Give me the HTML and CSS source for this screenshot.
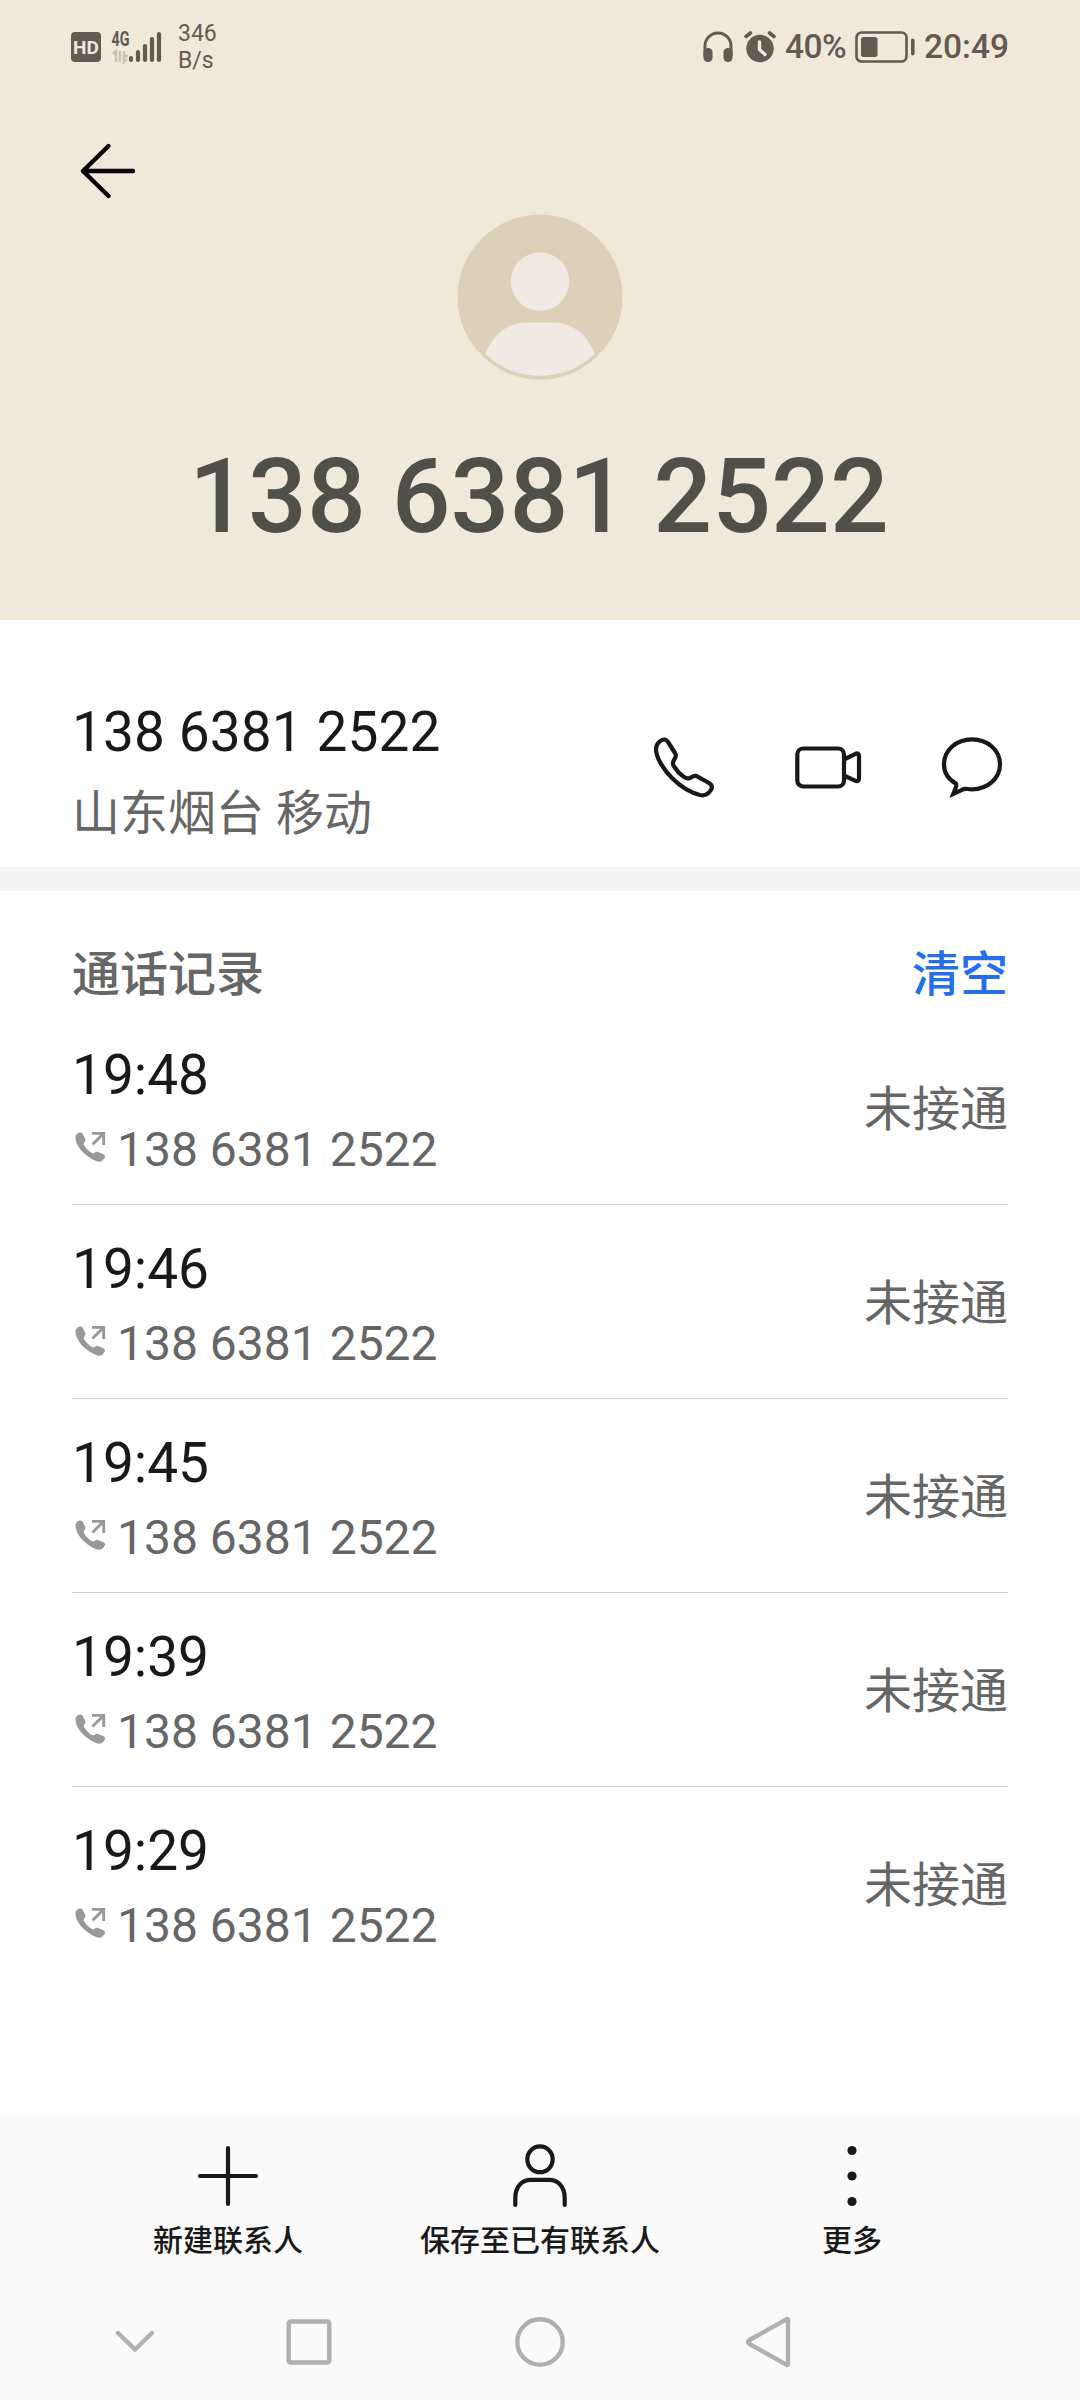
FILE: index.html
```html
<!DOCTYPE html>
<html lang="zh-CN">
<head>
    <meta charset="UTF-8">
    <meta name="viewport" content="width=device-width, initial-scale=1.0">
    <title>138 6381 2522</title>
    <link rel="stylesheet" href="styles.css">
</head>
<body>
    <header class="top">
        <div class="status">
            <div class="status-left">
                <span class="hd">HD</span>
                <svg class="signal" width="52" height="36" viewBox="0 0 52 36">
                    <text class="net" x="0.5" y="16.5" textLength="18" lengthAdjust="spacingAndGlyphs">4G</text>
                    <path class="data" d="M2 25L5 22V33M9 22V33M13 22V33L16 30M13 27H17"/>
                    <path class="bars" d="M20 29V31M27 23V31M34 17V31M41 10V31M48 5V31"/>
                </svg>
                <div class="speed">346<br>B/s</div>
            </div>
            <div class="status-right">
                <svg width="30" height="32" viewBox="0 0 30 32">
                    <path d="M2 25V15a13 13 0 0 1 26 0V25" fill="none" stroke="#645a52" stroke-width="3"/>
                    <rect x="0.5" y="17" width="9" height="14" rx="4.2" fill="#645a52"/>
                    <rect x="20.5" y="17" width="9" height="14" rx="4.2" fill="#645a52"/>
                </svg>
                <svg class="alarm" width="32" height="32" viewBox="0 0 32 32">
                    <circle cx="16" cy="17.5" r="13.7" fill="#645a52"/>
                    <path d="M2 5.5L6.5 2M30 5.5L25.5 2" stroke="#645a52" stroke-width="3.6" stroke-linecap="round"/>
                    <path d="M15.5 11V18.5L21 23.5" fill="none" stroke="#f0e9d9" stroke-width="3.4" stroke-linecap="round" stroke-linejoin="round"/>
                </svg>
                <span class="percent">40%</span>
                <svg class="battery" width="60" height="32" viewBox="0 0 60 32">
                    <rect x="1.5" y="1.5" width="50" height="29" rx="5" fill="none" stroke="#645a52" stroke-width="2.6"/>
                    <rect x="6" y="6" width="16.5" height="20" rx="2.5" fill="#645a52"/>
                    <rect x="56" y="7.5" width="3.6" height="17" rx="1.8" fill="#645a52"/>
                </svg>
                <span class="clock">20:49</span>
            </div>
        </div>
        <div class="toolbar">
            <svg width="72" height="72" viewBox="0 0 72 72">
                <path d="M36.500 11L11 36L36.500 61M11 36H61" fill="none" stroke="#000" stroke-width="4.4" stroke-linecap="round" stroke-linejoin="round"/>
            </svg>
        </div>
        <svg class="avatar" width="166" height="166" viewBox="0 0 166 166">
            <circle cx="83" cy="83" r="82.5" fill="#ddd0b8"/>
            <circle cx="83" cy="67.5" r="29.2" fill="#f0eae3"/>
            <path d="M28.5 140C35 121 50 108.500 70 108.500H96C116 108.500 131 121 137.500 140A79 79 0 0 1 28.500 140Z" fill="#f0eae3"/>
        </svg>
        <h1>138 6381 2522</h1>
    </header>

    <section class="contact">
        <div>
            <p class="number">138 6381 2522</p>
            <p class="place">山东烟台 移动</p>
        </div>
        <div class="actions">
            <svg width="72" height="72" viewBox="0 0 72 72">
                <path d="M8 18C8 13 12.500 8.500 16.500 8.500C18 8.500 19 9.300 20 11L27 22C28 23.500 28 25 27.300 26.500L25.500 30C24.500 32 24.700 33.500 26 35.500C28.500 39.500 31.500 43 36 46C38.500 47.700 40.500 48 43 46.500C45.500 44.800 47.500 44.300 50 45.800L61 52C64 53.800 64.500 56 63 58.800C60.500 63 56.500 65 52 64C42 61.500 32 55 24 47C16 39 8 27 8 18Z"/>
            </svg>
            <svg width="72" height="72" viewBox="0 0 72 72">
                <rect x="5.3" y="17.5" width="46.700" height="38" rx="6"/>
                <path d="M53 28L63.500 22.800Q67 21.500 67 25V47.500Q67 51 63.500 49.800L53 45"/>
            </svg>
            <svg width="72" height="72" viewBox="0 0 72 72">
                <path stroke-linejoin="miter" d="M20 52.700C12.500 48.500 8 41.500 8 33.300C8 19 20.500 8.400 36 8.400S64 19 64 33.300S51.500 58.300 36 58.300C29 58 28.500 57.300 26 58.800L17.300 62.800L19.800 56.500Q20.800 53.800 20 52.700Z"/>
            </svg>
        </div>
    </section>

    <section class="log">
        <div class="log-head">
            <h2>通话记录</h2>
            <a class="clear">清空</a>
        </div>
        <ul id="calls"></ul>
    </section>

    <footer>
        <div class="menu">
            <div class="item">
                <svg width="72" height="72" viewBox="0 0 72 72">
                    <path d="M36 8V64M8 36H64"/>
                </svg>
                <span>新建联系人</span>
            </div>
            <div class="item">
                <svg width="72" height="72" viewBox="0 0 72 72">
                    <ellipse cx="36" cy="19.300" rx="12.700" ry="12.900"/>
                    <path d="M11.300 65V58C11.300 46.500 18 39.800 27 39.800H45C54 39.800 60.700 46.500 60.700 58V65"/>
                </svg>
                <span>保存至已有联系人</span>
            </div>
            <div class="item">
                <svg class="dots" width="72" height="72" viewBox="0 0 72 72">
                    <circle cx="36" cy="10.500" r="4.600"/>
                    <circle cx="36" cy="36" r="4.600"/>
                    <circle cx="36" cy="61.500" r="4.600"/>
                </svg>
                <span>更多</span>
            </div>
        </div>
        <div class="nav">
            <svg width="54" height="54" viewBox="0 0 54 54"><path d="M10 18L27 34.500L44 18"/></svg>
            <svg width="54" height="54" viewBox="0 0 54 54"><rect x="6.700" y="6.500" width="40.600" height="41" rx="2"/></svg>
            <svg width="54" height="54" viewBox="0 0 54 54"><circle cx="27" cy="27" r="22.700"/></svg>
            <svg width="54" height="54" viewBox="0 0 54 54"><path d="M46.200 4.500Q48 3 48 5.500V48.500Q48 51 46.200 49.500L9.500 29Q6.500 27 9.500 25Z"/></svg>
        </div>
    </footer>

    <script>
        const times = ["19:48", "19:46", "19:45", "19:39", "19:29"];
        const calls = document.querySelector("#calls");

        // one row for each outgoing call
        times.forEach((time) => {
            calls.innerHTML += `
                <li>
                    <div>
                        <p class="time">${time}</p>
                        <p class="caller">
                            <svg width="31" height="31" viewBox="0 0 31 31">
                                <path d="M.5 4.500C1.500 1.500 4 0 6 .5C7 .7 7.500 1.500 8 2.500L10.300 7C11 8.700 9.500 9.500 8.700 11.500C8.500 13.500 13 19 17.500 21.300C19.500 21.800 20.500 19.500 22.500 19.700L28 22C30 23 30.500 24.500 29.500 26C28 28.500 25.500 30.500 22.500 29.500C12 26 0 15 .5 4.500Z" fill="#999"/>
                                <path d="M17 1.400H28.700V13M17.500 12.500L28 2" fill="none" stroke="#999" stroke-width="2.900"/>
                            </svg>
                            <span>138 6381 2522</span>
                        </p>
                    </div>
                    <span class="state">未接通</span>
                </li>`;
        });
    </script>
</body>
</html>
```
FILE: styles.css
```css
* {
    margin: 0;
    padding: 0;
    box-sizing: border-box;
}
body {
    display: flex;
    flex-direction: column;
    width: 1080px;
    height: 2400px;
    background-color: #fff;
    color: #191919;
    font-family: Roboto, "Noto Sans CJK SC", sans-serif;
}
svg {
    display: block;
    flex: none;
}

/* header */
.top {
    display: flex;
    flex-direction: column;
    height: 620px;
    background-color: #f0e9d9;
}
.status {
    display: flex;
    justify-content: space-between;
    height: 94px;
    padding: 0 71px;
    color: #645a52;
}
.status-left, .status-right {
    display: flex;
    align-items: center;
}
.hd {
    width: 30px;
    height: 30px;
    border-radius: 4px;
    background-color: #645a52;
    color: #f0e9d9;
    font-size: 19px;
    font-weight: bold;
    line-height: 31px;
    text-align: center;
}
.signal {
    margin-left: 10px;
}
.net {
    fill: #645a52;
    font-size: 20px;
    font-weight: bold;
}
.data {
    fill: none;
    stroke: #c9c0b2;
    stroke-width: 2.4;
}
.bars {
    stroke: #645a52;
    stroke-width: 4.2;
    stroke-linecap: round;
}
.speed {
    margin-left: 15px;
    font-size: 23px;
    line-height: 27px;
}
.alarm {
    margin-left: 11px;
}
.percent, .clock {
    font-size: 33.5px;
    font-weight: 500;
    line-height: 40px;
}
.percent {
    width: 62px;
    margin-left: 9px;
    letter-spacing: -0.5px;
}
.battery {
    margin: 0 9px 0 8px;
}
.toolbar {
    padding: 41px 0 0 72px;
}
.avatar {
    margin: 7px auto 0;
}
h1 {
    margin-top: 57px;
    color: #515048;
    font-size: 103.5px;
    font-weight: 500;
    line-height: 120px;
    letter-spacing: 0.1px;
    text-align: center;
    text-indent: -2px;
}

/* number and its actions */
.contact {
    display: flex;
    justify-content: space-between;
    height: 271px;
    padding: 76px 72px 0;
    border-bottom: 24px solid #f5f5f5;
}
.number {
    font-size: 55px;
    line-height: 72px;
    letter-spacing: 0.1px;
}
.place {
    margin-top: 14px;
    color: #666;
    font-size: 48px;
    line-height: 64px;
}
.actions {
    display: flex;
    gap: 72px;
    padding-top: 35px;
}
.actions svg, .menu svg {
    fill: none;
    stroke: #191919;
    stroke-width: 4.2;
    stroke-linejoin: round;
    stroke-linecap: round;
}

/* call log */
.log {
    flex: 1;
    padding: 48px 72px 0;
}
.log-head {
    display: flex;
    justify-content: space-between;
    font-size: 48px;
    line-height: 72px;
}
h2 {
    color: #666;
    font-size: 48px;
    font-weight: 500;
}
.clear {
    color: #256fec;
    font-weight: 500;
}
li {
    display: flex;
    align-items: center;
    justify-content: space-between;
    height: 194px;
    padding: 31px 0 25px;
    border-bottom: 1px solid #ccc;
    list-style: none;
}
li:last-child {
    border-bottom-color: transparent;
}
.time {
    font-size: 55px;
    line-height: 68px;
}
.caller {
    display: flex;
    align-items: center;
    gap: 11px;
    margin-top: 11px;
    padding-left: 3px;
    color: #666;
    font-size: 48px;
    line-height: 60px;
}
.caller svg {
    margin-bottom: 6px;
}
.state {
    margin-bottom: 2px;
    color: #666;
    font-size: 48px;
    line-height: 60px;
}

/* bottom */
footer {
    height: 284px;
    background-color: #fafafa;
}
.menu {
    display: flex;
    padding: 24px 72px 0;
}
.item {
    display: flex;
    flex: 1;
    flex-direction: column;
    align-items: center;
    font-size: 30px;
    font-weight: 500;
    line-height: 40px;
    padding-bottom: 4px;
}
.item span {
    margin-top: 9px;
}
.menu .dots {
    fill: #191919;
    stroke: none;
}
.nav {
    display: flex;
    padding: 50px 0 0 108px;
}
.nav svg {
    fill: none;
    stroke: #b0b0b0;
    stroke-width: 4.4;
    stroke-linecap: round;
}
.nav svg:nth-child(2) {
    margin-left: 120px;
}
.nav svg:nth-child(3) {
    margin-left: 177px;
}
.nav svg:nth-child(4) {
    margin-left: 173px;
}
```
